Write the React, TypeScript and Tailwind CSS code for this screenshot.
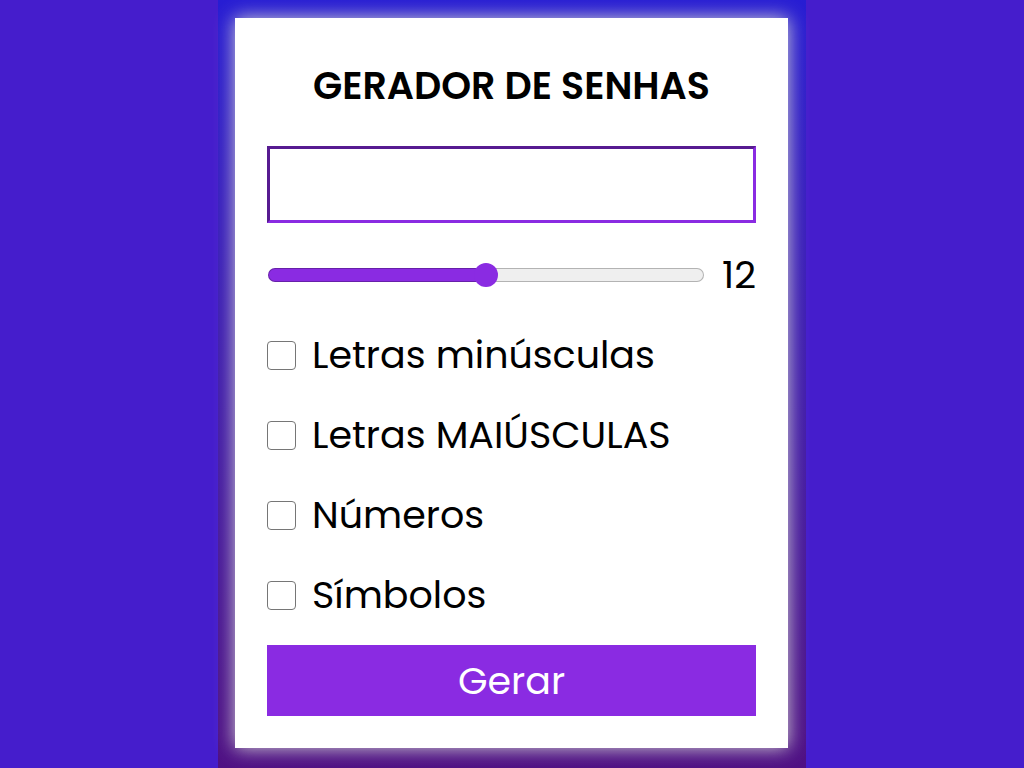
import { useState } from "react";

const OPTIONS = [
  { id: "lower", label: "Letras minúsculas", chars: "abcdefghijklmnopqrstuvwxyz" },
  { id: "upper", label: "Letras MAIÚSCULAS", chars: "ABCDEFGHIJKLMNOPQRSTUVWXYZ" },
  { id: "numbers", label: "Números", chars: "0123456789" },
  { id: "symbols", label: "Símbolos", chars: "!@#$%&*()-_=+?" },
];

const MIN = 4;
const MAX = 20;

export default function App() {
  const [length, setLength] = useState(12);
  const [password, setPassword] = useState("");
  const [selected, setSelected] = useState<string[]>([]);

  const toggle = (id: string) =>
    setSelected((s) => (s.includes(id) ? s.filter((x) => x !== id) : [...s, id]));

  const generate = () => {
    const pool = OPTIONS.filter((o) => selected.includes(o.id)).map((o) => o.chars).join("");
    if (!pool) return;
    setPassword(
      Array.from({ length }, () => pool[Math.floor(Math.random() * pool.length)]).join("")
    );
  };

  const fill = ((length - MIN) / (MAX - MIN)) * 100;

  return (
    <div className="flex min-h-screen justify-center bg-[#451dcc] font-['Poppins','Inter',sans-serif] text-[38px] leading-[56px] text-black">
      <div className="w-full max-w-[588px] bg-linear-to-b from-[#271dd3] to-[#4f1083] pt-[18px] pr-[18px] pb-5 pl-[17px]">
        <main className="bg-white p-8 shadow-[0_0_18px_#d3d3d3]">
          <h1 className="mt-2 text-center leading-14 font-semibold">GERADOR DE SENHAS</h1>
          <input
            type="text"
            readOnly
            aria-label="Senha gerada"
            value={password}
            className="mt-8 block h-[77px] w-full border-3 border-t-[#571b91] border-r-[#8a2be2] border-b-[#8a2be2] border-l-[#571b91] bg-white px-3 outline-none"
          />
          <div className="mt-6 flex items-center gap-4 pl-px">
            <input
              type="range"
              min={MIN}
              max={MAX}
              value={length}
              aria-label="Tamanho da senha"
              onChange={(e) => setLength(Number(e.target.value))}
              style={{
                backgroundImage: `linear-gradient(to right, #8a2be2 ${fill}%, #efefef ${fill}%)`,
              }}
              className="h-3.5 min-w-0 flex-1 appearance-none rounded-full border border-black/25 bg-origin-border [&::-webkit-slider-thumb]:size-6 [&::-webkit-slider-thumb]:appearance-none [&::-webkit-slider-thumb]:rounded-full [&::-webkit-slider-thumb]:bg-[#8a2be2]"
            />
            <output className="w-9 text-right">{length}</output>
          </div>
          <div className="mt-6 flex flex-col gap-6">
            {OPTIONS.map((o) => (
              <div key={o.id} className="flex items-center gap-4">
                <input
                  id={o.id}
                  type="checkbox"
                  checked={selected.includes(o.id)}
                  onChange={() => toggle(o.id)}
                  className="size-[29px] shrink-0 appearance-none rounded-[4px] border border-[#767676] bg-white checked:border-[#8a2be2] checked:bg-[#8a2be2]"
                />
                <label htmlFor={o.id}>{o.label}</label>
              </div>
            ))}
          </div>
          <button
            type="button"
            onClick={generate}
            className="mt-[22px] block h-[71px] w-full bg-[#8a2be2] text-white"
          >
            Gerar
          </button>
        </main>
      </div>
    </div>
  );
}
